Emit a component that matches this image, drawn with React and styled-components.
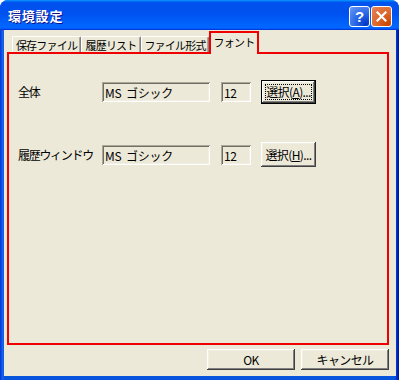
import React from 'react'
import styled, { createGlobalStyle } from 'styled-components'

const GlobalStyle = createGlobalStyle`
  html, body {
    margin: 0;
    padding: 0;
    background: #fff;
  }
  * {
    box-sizing: border-box;
  }
`

const font = `"MS UI Gothic", "Noto Sans CJK JP", "Liberation Sans", sans-serif`

const Window = styled.div`
  width: 399px;
  height: 380px;
  display: flex;
  flex-direction: column;
  background: linear-gradient(90deg, #0831d9 0, #166aee 3px, #0855dd 4px, #0855dd 395px, #003bda 396px, #00138c 399px);
  border-radius: 8px 8px 0 0;
  overflow: hidden;
  font-family: ${font};
  color: #000;
`

const TitleBar = styled.div`
  height: 30px;
  display: flex;
  align-items: flex-start;
  padding: 0 7px 0 8px;
  background: linear-gradient(180deg, #0997ff, #0053ee 8%, #0050ee 40%, #06f 88%, #06f 93%, #005bff 95%, #003dd7 96%, #003dd7);
`

const Title = styled.div`
  margin-top: 6px;
  color: #fff;
  font-weight: bold;
  font-size: 13px;
  letter-spacing: 0.8px;
  text-shadow: 1px 1px #0f1089;
`

const Controls = styled.div`
  margin-left: auto;
  margin-top: 6px;
  display: flex;
  gap: 1px;
`

const CapButton = styled.div`
  width: 21px;
  height: 21px;
  border: 1px solid #fff;
  border-radius: 3px;
  display: flex;
  align-items: center;
  justify-content: center;
  color: #fff;
  font: bold 15px "Liberation Sans", sans-serif;
  background: ${p => p.$close
    ? 'radial-gradient(circle at 85% 90%, #cc4600 0, #dc6527 45%, #e5835d 100%)'
    : 'radial-gradient(circle at 85% 90%, #0037c8 0, #2866e6 45%, #6c9af5 100%)'};
`

const Client = styled.div`
  flex: 1;
  margin: 0 3px 4px 4px;
  padding: 1px 0 0 3px;
  background: #ece9d8;
`

const Column = styled.div`
  width: 382px;
  display: flex;
  flex-direction: column;
`

const TabStrip = styled.div`
  height: 21px;
  display: flex;
  align-items: flex-end;
  padding-left: 5px;
  position: relative;
  z-index: 1;
`

const Tab = styled.div`
  width: ${p => p.$w}px;
  display: flex;
  align-items: center;
  justify-content: center;
  font-size: 11px;
  letter-spacing: -0.8px;
  background: #ece9d8;
  white-space: nowrap;
  ${p => p.$active ? `
    height: 23px;
    margin-bottom: -2px;
    padding-bottom: 3px;
    border: 2px solid #e00;
    border-bottom: none;
  ` : `
    height: 16px;
    padding-top: 1px;
    border-top: 1px solid #fff;
    border-left: 1px solid #fff;
    border-right: 1px solid #808080;
    border-radius: 2px 2px 0 0;
    box-shadow: inset -1px 0 #aca899;
  `}
`

const Panel = styled.div`
  height: 293px;
  border: 2px solid #e00;
  padding: 25px 0 0 9px;
  display: flex;
  flex-direction: column;
  gap: 38px;
`

const Row = styled.div`
  height: 25px;
  display: flex;
  align-items: center;
`

const Label = styled.div`
  width: 84px;
  font-size: 12px;
  letter-spacing: -1.3px;
  white-space: nowrap;
`

const Field = styled.div`
  width: ${p => p.$w}px;
  height: 20px;
  margin-right: ${p => p.$gap}px;
  padding: 1px 0 0 3px;
  display: flex;
  align-items: center;
  font-size: 12px;
  letter-spacing: -0.3px;
  white-space: pre;
  background: #ece9d8;
  box-shadow: inset 1px 1px #aca899, inset -1px -1px #fff, inset 2px 2px #716f64, inset -2px -2px #f1efe2;
`

const Button = styled.div`
  width: ${p => p.$w}px;
  height: ${p => p.$h}px;
  display: flex;
  align-items: center;
  justify-content: center;
  position: relative;
  font-size: 12px;
  letter-spacing: -0.6px;
  white-space: nowrap;
  background: #ece9d8;
  border: ${p => p.$focused ? '1px solid #000' : 'none'};
  box-shadow: inset -1px -1px #404040, inset 1px 1px #fff, inset -2px -2px #808080, inset 2px 2px #f1efe2;

  u {
    text-decoration: underline;
  }
`

const FocusRing = styled.span`
  position: absolute;
  inset: 3px;
  border: 1px dotted #000;
  pointer-events: none;
`

const Footer = styled.div`
  display: flex;
  justify-content: flex-end;
  gap: 6px;
  margin-top: 4px;
`

export default function App() {
  return (
    <>
      <GlobalStyle />
      <Window>
        <TitleBar>
          <Title>環境設定</Title>
          <Controls>
            <CapButton>?</CapButton>
            <CapButton $close>
              <svg width="11" height="11" viewBox="0 0 11 11">
                <path d="M1.5 1.5 L9.5 9.5 M9.5 1.5 L1.5 9.5" stroke="#fff" strokeWidth="2.2" strokeLinecap="square" />
              </svg>
            </CapButton>
          </Controls>
        </TitleBar>
        <Client>
          <Column>
            <TabStrip>
              <Tab $w={69}>保存ファイル</Tab>
              <Tab $w={60}>履歴リスト</Tab>
              <Tab $w={68}>ファイル形式</Tab>
              <Tab $w={50} $active>フォント</Tab>
            </TabStrip>
            <Panel>
              <Row>
                <Label>全体</Label>
                <Field $w={108} $gap={11}>MS  ゴシック</Field>
                <Field $w={30} $gap={10}>12</Field>
                <Button $w={55} $h={24} $focused>
                  <FocusRing />
                  選択(<u>A</u>)...
                </Button>
              </Row>
              <Row>
                <Label>履歴ウィンドウ</Label>
                <Field $w={108} $gap={11}>MS  ゴシック</Field>
                <Field $w={30} $gap={10}>12</Field>
                <Button $w={55} $h={25}>選択(<u>H</u>)...</Button>
              </Row>
            </Panel>
            <Footer>
              <Button $w={88} $h={21}>OK</Button>
              <Button $w={88} $h={21}>キャンセル</Button>
            </Footer>
          </Column>
        </Client>
      </Window>
    </>
  )
}
